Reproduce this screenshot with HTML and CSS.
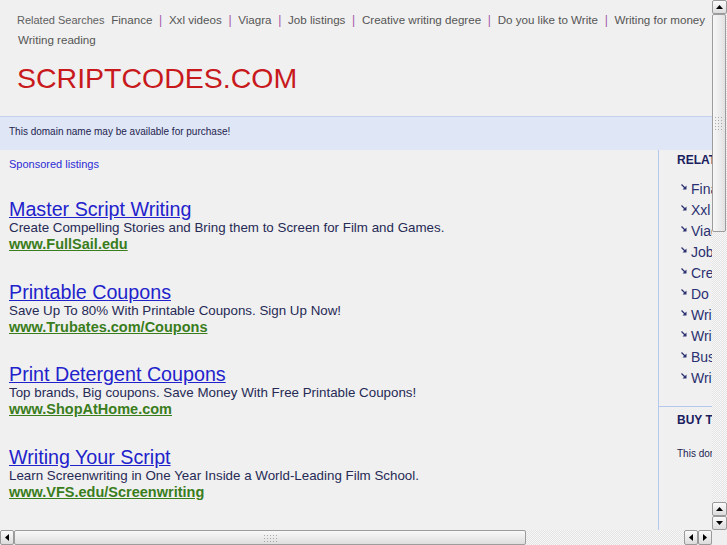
FILE: index.html
```html
<!DOCTYPE html>
<html lang="en">
<head>
    <meta charset="UTF-8">
    <meta name="viewport" content="width=device-width, initial-scale=1.0">
    <title>scriptcodes.com</title>

    <link rel="stylesheet" href="styles.css">

</head>

<body>

    <div class="window">

        <div class="viewport">
            <div class="page">

                <div class="header">
                    <div class="related">
                        <span class="label">Related Searches</span>
                        <a href="#">Finance</a><span class="sep">|</span>
                        <a href="#">Xxl videos</a><span class="sep">|</span>
                        <a href="#">Viagra</a><span class="sep">|</span>
                        <a href="#">Job listings</a><span class="sep">|</span>
                        <a href="#">Creative writing degree</a><span class="sep">|</span>
                        <a href="#">Do you like to Write</a><span class="sep">|</span>
                        <a href="#">Writing for money</a><span class="sep">|</span>
                        <a href="#">Writing reading</a>
                    </div>
                    <h1 class="domain">SCRIPTCODES.COM</h1>
                </div>

                <div class="banner">This domain name may be available for purchase!</div>

                <div class="content">

                    <div class="main">
                        <p class="sponsored">Sponsored listings</p>

                        <div class="ad">
                            <a class="ad-title" href="#">Master Script Writing</a>
                            <p class="ad-desc">Create Compelling Stories and Bring them to Screen for Film and Games.</p>
                            <a class="ad-url" href="#">www.FullSail.edu</a>
                        </div>

                        <div class="ad">
                            <a class="ad-title" href="#">Printable Coupons</a>
                            <p class="ad-desc">Save Up To 80% With Printable Coupons. Sign Up Now!</p>
                            <a class="ad-url" href="#">www.Trubates.com/Coupons</a>
                        </div>

                        <div class="ad">
                            <a class="ad-title" href="#">Print Detergent Coupons</a>
                            <p class="ad-desc">Top brands, Big coupons. Save Money With Free Printable Coupons!</p>
                            <a class="ad-url" href="#">www.ShopAtHome.com</a>
                        </div>

                        <div class="ad">
                            <a class="ad-title" href="#">Writing Your Script</a>
                            <p class="ad-desc">Learn Screenwriting in One Year Inside a World-Leading Film School.</p>
                            <a class="ad-url" href="#">www.VFS.edu/Screenwriting</a>
                        </div>
                    </div>

                    <div class="side">
                        <div class="side-block">
                            <h2>RELATED SEARCHES</h2>
                            <ul class="side-list">
                                <li><svg viewBox="0 0 6 6"><path d="M0.5 0.5 L4 4" stroke="#2b3070" stroke-width="1.2"/><path d="M5.5 1.5 V5.5 H1.5 Z" fill="#2b3070"/></svg><a href="#">Finance</a></li>
                                <li><svg viewBox="0 0 6 6"><path d="M0.5 0.5 L4 4" stroke="#2b3070" stroke-width="1.2"/><path d="M5.5 1.5 V5.5 H1.5 Z" fill="#2b3070"/></svg><a href="#">Xxl videos</a></li>
                                <li><svg viewBox="0 0 6 6"><path d="M0.5 0.5 L4 4" stroke="#2b3070" stroke-width="1.2"/><path d="M5.5 1.5 V5.5 H1.5 Z" fill="#2b3070"/></svg><a href="#">Viagra</a></li>
                                <li><svg viewBox="0 0 6 6"><path d="M0.5 0.5 L4 4" stroke="#2b3070" stroke-width="1.2"/><path d="M5.5 1.5 V5.5 H1.5 Z" fill="#2b3070"/></svg><a href="#">Job listings</a></li>
                                <li><svg viewBox="0 0 6 6"><path d="M0.5 0.5 L4 4" stroke="#2b3070" stroke-width="1.2"/><path d="M5.5 1.5 V5.5 H1.5 Z" fill="#2b3070"/></svg><a href="#">Creative writing degree</a></li>
                                <li><svg viewBox="0 0 6 6"><path d="M0.5 0.5 L4 4" stroke="#2b3070" stroke-width="1.2"/><path d="M5.5 1.5 V5.5 H1.5 Z" fill="#2b3070"/></svg><a href="#">Do you like to Write</a></li>
                                <li><svg viewBox="0 0 6 6"><path d="M0.5 0.5 L4 4" stroke="#2b3070" stroke-width="1.2"/><path d="M5.5 1.5 V5.5 H1.5 Z" fill="#2b3070"/></svg><a href="#">Writing for money</a></li>
                                <li><svg viewBox="0 0 6 6"><path d="M0.5 0.5 L4 4" stroke="#2b3070" stroke-width="1.2"/><path d="M5.5 1.5 V5.5 H1.5 Z" fill="#2b3070"/></svg><a href="#">Writing reading</a></li>
                                <li><svg viewBox="0 0 6 6"><path d="M0.5 0.5 L4 4" stroke="#2b3070" stroke-width="1.2"/><path d="M5.5 1.5 V5.5 H1.5 Z" fill="#2b3070"/></svg><a href="#">Business plans</a></li>
                                <li><svg viewBox="0 0 6 6"><path d="M0.5 0.5 L4 4" stroke="#2b3070" stroke-width="1.2"/><path d="M5.5 1.5 V5.5 H1.5 Z" fill="#2b3070"/></svg><a href="#">Writing jobs</a></li>
                            </ul>
                        </div>
                        <div class="side-block buy">
                            <h2>BUY THIS DOMAIN</h2>
                            <p>This domain may be for sale by its owner!</p>
                        </div>
                    </div>

                </div>

            </div>
        </div>

        <!-- fake scrollbars -->
        <div class="vscroll">
            <div class="btn"><svg viewBox="0 0 7 4"><path d="M0 4 L3.5 0 L7 4 Z"/></svg></div>
            <div class="thumb vthumb"><span class="grip"></span></div>
            <div class="track"></div>
            <div class="btn"><svg viewBox="0 0 7 4"><path d="M0 4 L3.5 0 L7 4 Z"/></svg></div>
            <div class="btn"><svg viewBox="0 0 7 4"><path d="M0 0 L3.5 4 L7 0 Z"/></svg></div>
        </div>

        <div class="hscroll">
            <div class="btn"><svg viewBox="0 0 4 7"><path d="M4 0 L0 3.5 L4 7 Z"/></svg></div>
            <div class="thumb hthumb"><span class="grip"></span></div>
            <div class="track"></div>
            <div class="btn"><svg viewBox="0 0 4 7"><path d="M4 0 L0 3.5 L4 7 Z"/></svg></div>
            <div class="btn"><svg viewBox="0 0 4 7"><path d="M0 0 L4 3.5 L0 7 Z"/></svg></div>
        </div>

        <div class="corner"></div>

    </div>

</body>

</html>
```

FILE: styles.css
```css
*, html {
    box-sizing: border-box;
    margin: 0;
    padding: 0;
}

body {
    font-family: "Liberation Sans", Arial, sans-serif;
    background: #efefef;
    overflow: hidden;
}

a {
    text-decoration: none;
}

.window {
    display: grid;
    grid-template-columns: 712px 15px;
    grid-template-rows: 530px 15px;
    width: 727px;
    height: 545px;
}

.viewport {
    overflow: hidden;
    background: #f0f0f0;
}

.page {
    width: 880px;
}

/* header */

.header {
    padding: 10px 0 0 17px;
    height: 116px;
}

.related {
    display: flex;
    flex-wrap: wrap;
    align-items: baseline;
    column-gap: 5.7px;
    width: 722px;
    line-height: 19px;
}

.related .label {
    font-size: 11px;
    color: #606060;
}

.related a {
    font-size: 11.6px;
    color: #555;
    padding: 0 1px;
}

.related .sep {
    font-size: 12px;
    color: #a455a8;
}

.domain {
    margin-top: 13px;
    font-size: 28.5px;
    font-weight: normal;
    line-height: 32px;
    color: #c8191c;
}

.banner {
    height: 34px;
    border-top: 1px solid #c3d1ee;
    background: #dfe6f5;
    padding: 8px 0 0 9px;
    font-size: 10px;
    line-height: 14px;
    color: #1e2450;
}

/* content */

.content {
    display: flex;
    height: 380px;
}

.main {
    width: 659px;
    flex-shrink: 0;
    border-right: 1px solid #b4c8ee;
    padding: 7px 0 0 9px;
}

.sponsored {
    font-size: 11px;
    line-height: 14px;
    color: #2b2bd6;
    margin-bottom: 28px;
}

.ad {
    margin-bottom: 28.5px;
}

.ad-title {
    display: block;
    width: max-content;
    font-size: 19.7px;
    line-height: 20px;
    color: #2222cc;
    text-decoration: underline;
}

.ad-desc {
    font-size: 13.35px;
    line-height: 17px;
    color: #262a55;
}

.ad-url {
    display: block;
    width: max-content;
    font-size: 14.5px;
    font-weight: bold;
    line-height: 17px;
    color: #3a7d1c;
    text-decoration: underline;
}

.side {
    flex: 1;
    white-space: nowrap;
}

.side-block {
    padding: 2px 0 18px 18px;
}

.side h2 {
    font-size: 12px;
    line-height: 16px;
    color: #1a205e;
}

.side-list {
    list-style: none;
    margin-top: 10px;
}

.side-list li {
    display: flex;
    align-items: center;
    height: 21px;
    padding-left: 4px;
}

.side-list svg {
    width: 6px;
    height: 6px;
    margin: -4px 4px 0 0;
}

.side-list a {
    font-size: 14px;
    color: #2b3070;
}

.buy {
    border-top: 1px solid #b4c8ee;
    padding-top: 5px;
}

.buy p {
    margin-top: 20px;
    font-size: 10px;
    line-height: 12px;
    color: #1e2450;
}

/* scrollbars */

.vscroll, .hscroll {
    display: flex;
    background: repeating-conic-gradient(#e4e4e4 0 25%, #f7f7f7 0 50%) 0 0 / 2px 2px;
}

.vscroll {
    flex-direction: column;
}

.btn {
    flex: 0 0 14px;
    display: flex;
    align-items: center;
    justify-content: center;
    border: 1px solid #9a9a9a;
    border-radius: 2px;
    background: linear-gradient(#fbfbfb, #dcdcdc);
}

.vscroll .btn {
    height: 14px;
}

.hscroll .btn {
    width: 14px;
}

.vscroll .btn svg {
    width: 7px;
    height: 4px;
}

.hscroll .btn svg {
    width: 4px;
    height: 7px;
}

.thumb {
    display: flex;
    align-items: center;
    justify-content: center;
    border: 1px solid #9c9c9c;
    border-radius: 2px;
    background: linear-gradient(90deg, #f7f7f7, #e2e2e2);
}

.vthumb {
    flex: 0 0 218px;
    margin-right: 1px;
}

.hthumb {
    flex: 0 0 512px;
    background: linear-gradient(#f9f9f9, #dedede);
}

.grip {
    width: 14px;
    height: 8px;
    background: radial-gradient(circle, #a8a8a8 0.8px, transparent 1px) 0 0 / 3px 3px;
}

.vthumb .grip {
    width: 10px;
    height: 14px;
}

.track {
    flex: 1;
}

.corner {
    background: #efefef;
}
```
